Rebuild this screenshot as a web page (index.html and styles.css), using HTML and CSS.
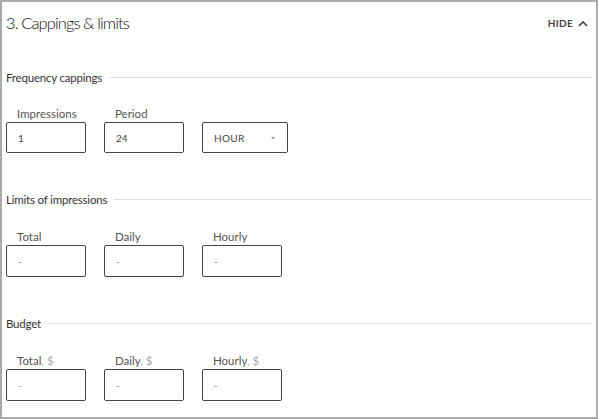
FILE: index.html
```html
<!DOCTYPE html>
<html>
<head>
<meta charset="utf-8">
<link rel="stylesheet" href="styles.css">
</head>
<body>
<div class="panel">
  <div class="header">
    <div class="title">3. Cappings &amp; limits</div>
    <div class="hide">HIDE
      <svg class="chev" width="10" height="7" viewBox="0 0 10 7"><path d="M1 6 L5 2 L9 6" fill="none" stroke="#444" stroke-width="1.6"/></svg>
    </div>
  </div>

  <div class="section">
    <div class="legend"><span>Frequency cappings</span><div class="rule"></div></div>
    <div class="fields first">
      <div class="field"><div class="label">Impressions</div><div class="box">1</div></div>
      <div class="field"><div class="label">Period</div><div class="box">24</div></div>
      <div class="field"><div class="label">&nbsp;</div><div class="box select"><span>HOUR</span><span class="caret"></span></div></div>
    </div>
  </div>

  <div class="section">
    <div class="legend"><span>Limits of impressions</span><div class="rule"></div></div>
    <div class="fields">
      <div class="field"><div class="label">Total</div><div class="box dash">-</div></div>
      <div class="field"><div class="label">Daily</div><div class="box dash">-</div></div>
      <div class="field"><div class="label">Hourly</div><div class="box dash">-</div></div>
    </div>
  </div>

  <div class="section">
    <div class="legend"><span>Budget</span><div class="rule"></div></div>
    <div class="fields">
      <div class="field"><div class="label">Total<span class="cur">, $</span></div><div class="box dash">-</div></div>
      <div class="field"><div class="label">Daily<span class="cur">, $</span></div><div class="box dash">-</div></div>
      <div class="field"><div class="label">Hourly<span class="cur">, $</span></div><div class="box dash">-</div></div>
    </div>
  </div>
</div>
</body>
</html>
```
FILE: styles.css
```css
html, body {
  margin: 0;
  padding: 0;
  background: #fff;
}
body {
  font-family: "Lato", "Noto Sans", sans-serif;
  color: #333;
}
.panel {
  width: 598px;
  height: 419px;
  box-sizing: border-box;
  border: 2px solid #aaa;
  padding: 0 4px 0 4px;
}
.header {
  display: flex;
  justify-content: space-between;
  align-items: center;
  height: 40px;
  padding-right: 4px;
}
.title {
  font-size: 16.5px;
  font-weight: 300;
  letter-spacing: -0.9px;
  color: #111;
  margin-top: 1px;
}
.hide {
  display: flex;
  align-items: center;
  gap: 5px;
  font-size: 10px;
  font-weight: 700;
  color: #444;
  letter-spacing: 0.3px;
  margin-top: 2px;
}
.chev {
  display: block;
}
.section {
  padding-top: 28px;
}
.section + .section {
  padding-top: 39px;
}
.legend {
  display: flex;
  align-items: center;
  gap: 7px;
  font-size: 11.5px;
  letter-spacing: -0.2px;
  color: #333;
  height: 14px;
}
.rule {
  flex: 1;
  height: 1px;
  background: #ddd;
}
.fields {
  display: flex;
  gap: 18px;
  margin-top: 23px;
}
.fields.first {
  margin-top: 22px;
}
.field {
  display: flex;
  flex-direction: column;
}
.label {
  font-size: 11.5px;
  color: #555;
  padding-left: 11px;
  height: 15px;
  line-height: 15px;
  margin-bottom: 1px;
}
.cur {
  color: #a9a9a9;
}
.box {
  width: 80px;
  height: 31px;
  box-sizing: border-box;
  border: 1px solid #444;
  border-radius: 2px;
  font-size: 10px;
  color: #444;
  padding-left: 11px;
  display: flex;
  align-items: center;
}
.box.dash {
  color: #888;
  height: 32px;
}
.box.select {
  width: 86px;
  justify-content: space-between;
  padding-right: 12px;
  font-size: 10px;
  letter-spacing: 0.3px;
}
.caret {
  width: 0;
  height: 0;
  border-left: 2.5px solid transparent;
  border-right: 2.5px solid transparent;
  border-top: 2.5px solid #888;
}
```
